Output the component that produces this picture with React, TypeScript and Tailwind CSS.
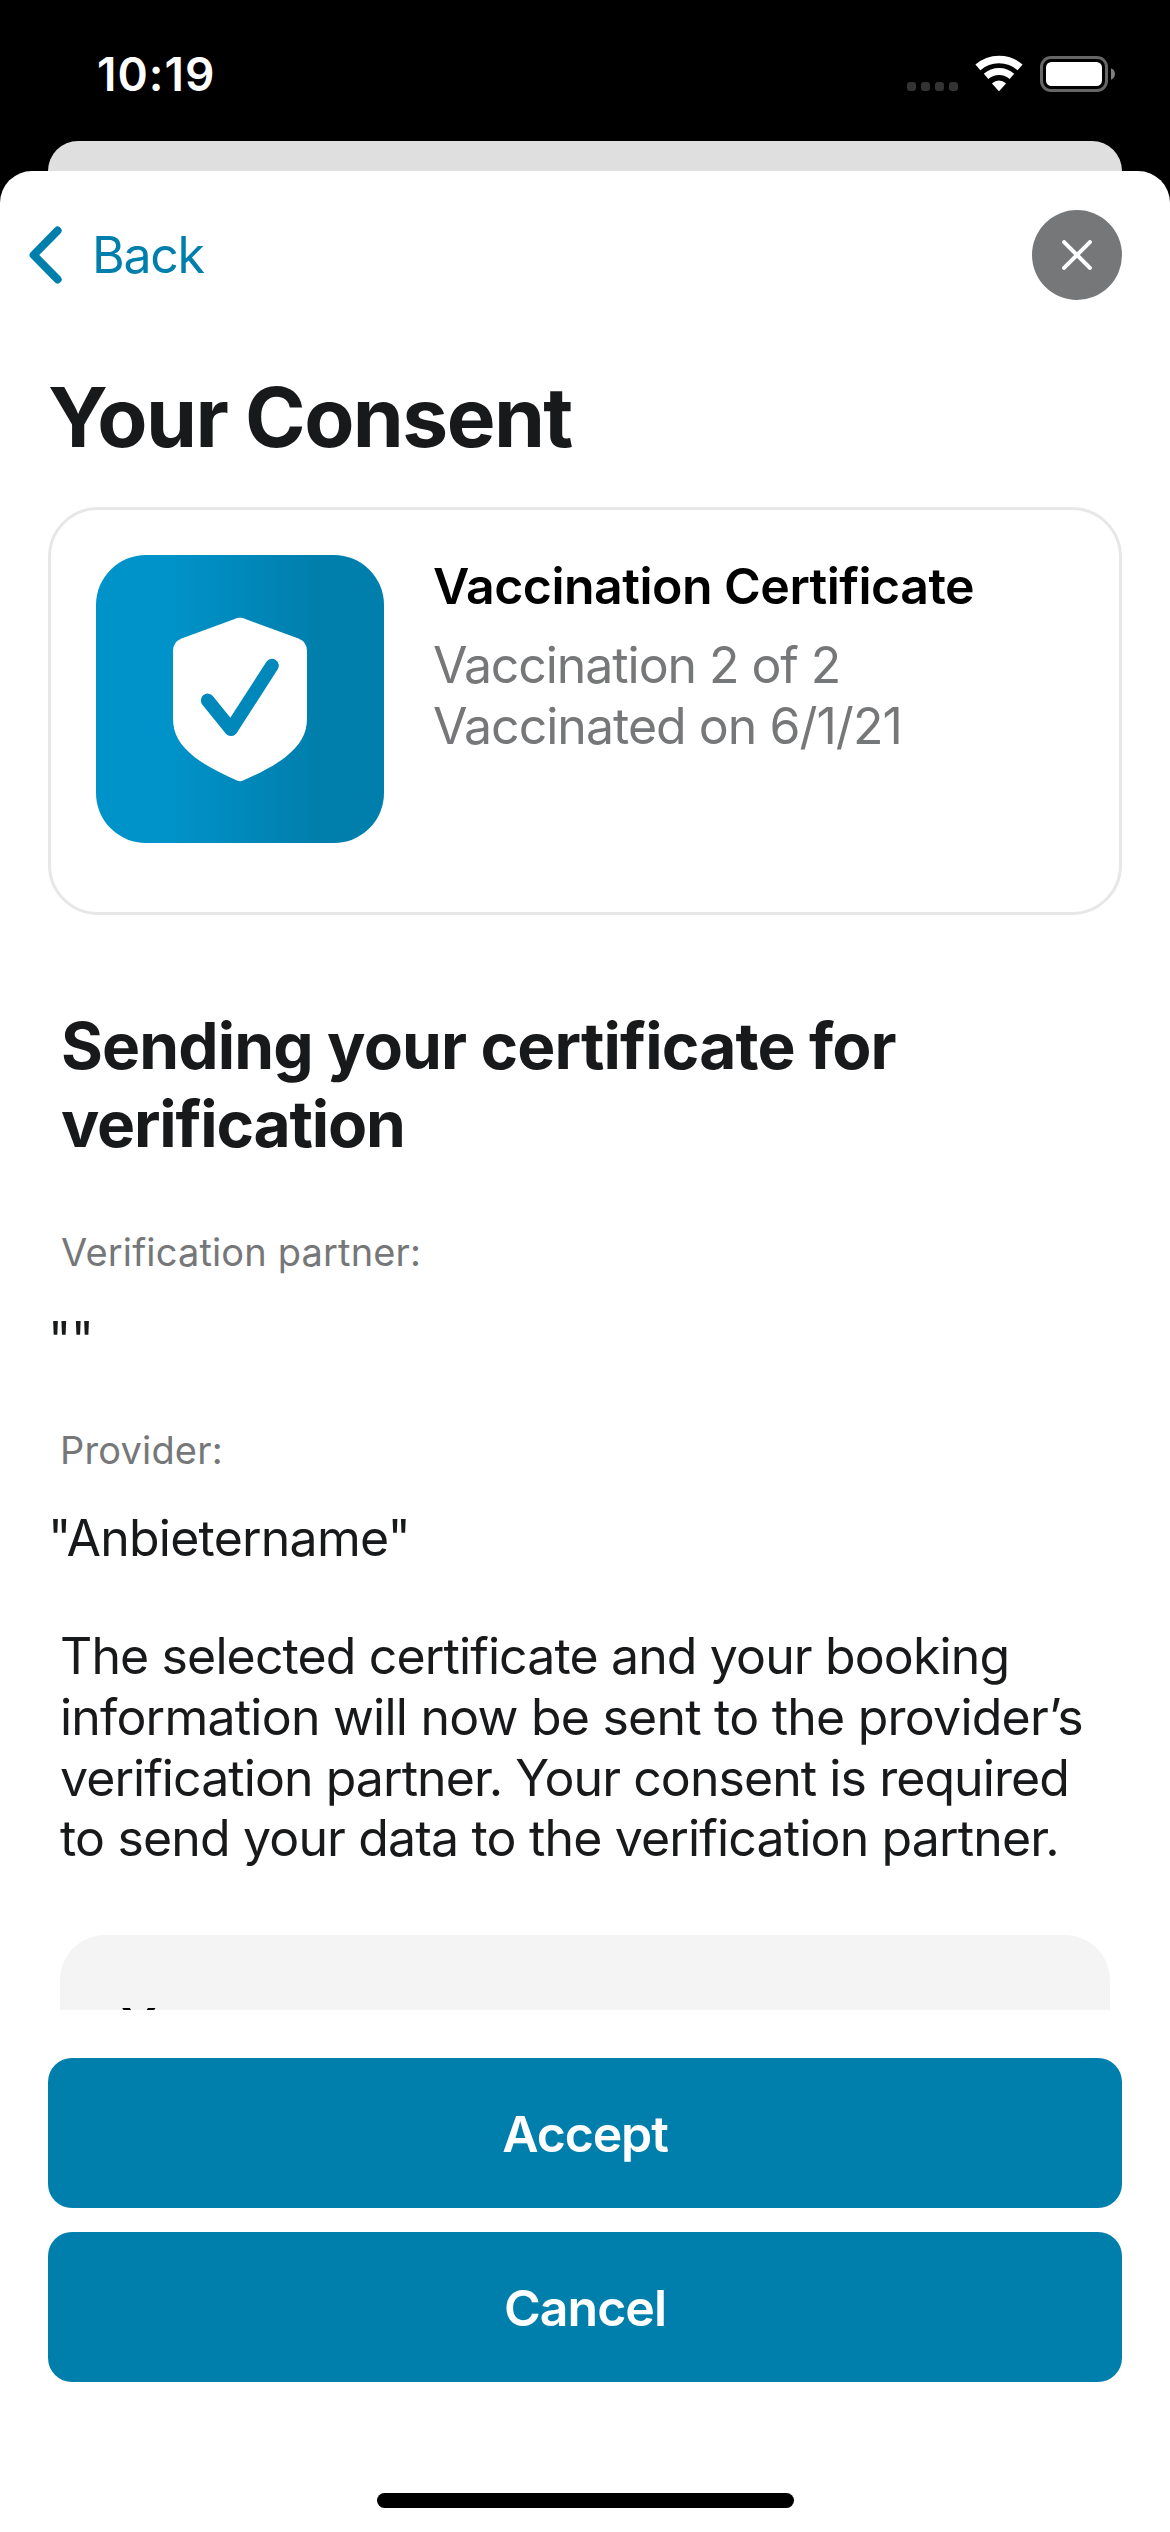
import React from "react";

function WifiIcon() {
  return (
    <svg className="h-9 w-12" viewBox="0 0 48 36" fill="none">
      <path d="M2.9 12.4A32 32 0 0 1 45.1 12.4" stroke="#fff" strokeWidth="7.6" />
      <path d="M11.1 21.4A19.4 19.4 0 0 1 36.9 21.4" stroke="#fff" strokeWidth="6.8" />
      <path d="M24 35.2L17.9 28.6A9 9 0 0 1 30.1 28.6Z" fill="#fff" stroke="#fff" strokeWidth="1.4" strokeLinejoin="round" />
    </svg>
  );
}

function BatteryIcon() {
  return (
    <svg className="h-9 w-[76px]" viewBox="0 0 76 36" fill="none">
      <rect x="1.5" y="1.5" width="65" height="33" rx="9.5" stroke="#666" strokeWidth="3" />
      <rect x="6" y="6" width="56" height="24" rx="5.5" fill="#fff" />
      <path d="M71 12.2C73.4 13.2 75 15.4 75 18S73.4 22.8 71 23.8Z" fill="#808080" />
    </svg>
  );
}

function StatusBar() {
  return (
    <div className="flex h-[141px] justify-between pr-[54px] pl-[97px]">
      <div className="mt-[46px] h-14 text-[46px] leading-[56px] font-semibold tracking-[1.02px] text-white">10:19</div>
      <div className="flex h-[92px] items-end">
        <div className="mr-[17px] mb-px flex gap-[5px]">
          {[0, 1, 2, 3].map((i) => (
            <div key={i} className="size-[9px] rounded-[3px] bg-[#333]" />
          ))}
        </div>
        <div className="mb-px"><WifiIcon /></div>
        <div className="ml-[17px]"><BatteryIcon /></div>
      </div>
    </div>
  );
}

function SheetHeader() {
  return (
    <div className="flex h-[168px] items-center justify-between pr-12 pl-[27px]">
      <button className="flex items-center text-[#007fad]">
        <svg className="h-[66px] w-[37px]" viewBox="0 0 37 66" fill="none">
          <path d="M30.6 8.6L6.6 33L30.6 57.4" stroke="currentColor" strokeWidth="8" strokeLinecap="round" strokeLinejoin="round" />
        </svg>
        <span className="ml-7 text-[50px] leading-[60px] tracking-[-1.28px]">Back</span>
      </button>
      <button className="flex size-[90px] items-center justify-center rounded-full bg-[#757779]">
        <svg className="size-[30px]" viewBox="0 0 30 30" fill="none">
          <path d="M2.1 2.1L27.9 27.9M27.9 2.1L2.1 27.9" stroke="#fff" strokeWidth="4" strokeLinecap="round" />
        </svg>
      </button>
    </div>
  );
}

function ShieldTile() {
  return (
    <div className="flex size-72 shrink-0 justify-center rounded-[50px] bg-linear-to-r from-[#0093c9] from-25% to-[#007fad] to-76%">
      <svg className="mt-[62px] h-[165px] w-[134px]" viewBox="0 0 134 165" fill="none">
        <path
          d="M61 2.2Q67 -0.6 73 2.2L125.5 21.5Q134 25 134 34V101C134 117 127.5 128 112 140.5C100 149.5 85 157 70 163.5Q67 165 64 163.5C49 157 34 149.5 22 140.5C6.5 128 0 117 0 101V34Q0 25 8.5 21.5Z"
          fill="#fff"
        />
        <path d="M34.7 83.4L58 112.3L99 48.6" stroke="#0088ba" strokeWidth="13.6" strokeLinecap="round" strokeLinejoin="round" />
      </svg>
    </div>
  );
}

function CertificateCard() {
  return (
    <div className="mx-12 mt-[39px] flex h-[408px] rounded-[50px] border-[3px] border-[#e7e7e7] pt-[45px] pl-[45px]">
      <ShieldTile />
      <div className="ml-[49px] text-[50px] whitespace-nowrap">
        <div className="mt-px leading-[60px] font-semibold tracking-[-0.52px] text-black">Vaccination Certificate</div>
        <div className="mt-[19px] leading-[61px] text-[#757779]">
          <div className="tracking-[-1.08px]">Vaccination 2 of 2</div>
          <div className="tracking-[-0.98px]">Vaccinated on 6/1/21</div>
        </div>
      </div>
    </div>
  );
}

export default function App() {
  return (
    <div className="flex h-[2532px] w-[1170px] flex-col overflow-hidden bg-black font-['Inter',sans-serif] text-[#18191b]">
      <StatusBar />
      <div className="mx-12 h-[30px] shrink-0 rounded-t-[30px] bg-[#dfdfdf]" />
      <div className="flex flex-1 flex-col rounded-t-[32px] bg-white">
        <SheetHeader />
        <h1 className="mt-[29px] ml-12 text-[82px] leading-[100px] font-bold tracking-[-1.6px]">Your Consent</h1>
        <CertificateCard />
        <h2 className="mt-[92px] ml-[61px] text-[64px] leading-[78px] font-bold">
          <span className="block tracking-[-0.86px]">Sending your certificate for</span>
          <span className="block tracking-[-1.18px]">verification</span>
        </h2>
        <div className="mt-[66px] ml-[61px] text-[38px] leading-[46px] tracking-[0.15px] text-[#757779]">Verification partner:</div>
        <div className="mt-[35px] ml-12 text-[50px] leading-[60px] tracking-[-0.59px]">""</div>
        <div className="mt-[57px] ml-[60px] text-[38px] leading-[46px] tracking-[0.17px] text-[#757779]">Provider:</div>
        <div className="mt-[35px] ml-12 text-[50px] leading-[60px] tracking-[-0.78px]">"Anbietername"</div>
        <p className="mt-[58px] ml-[60px] text-[50px] leading-[60.75px] whitespace-nowrap">
          <span className="block tracking-[-0.87px]">The selected certificate and your booking</span>
          <span className="block tracking-[-0.77px]">information will now be sent to the provider’s</span>
          <span className="block tracking-[-0.93px]">verification partner. Your consent is required</span>
          <span className="block tracking-[-0.84px]">to send your data to the verification partner.</span>
        </p>
        <div className="mx-[60px] mt-[66px] h-[75px] overflow-hidden rounded-t-[45px] bg-[#f4f4f4] pt-[61px] pl-[61px] text-[50px] leading-[60px] font-semibold tracking-[-0.8px] text-black">
          Your consent
        </div>
        <div className="mx-12 mt-12 flex flex-col gap-6 text-[50px] leading-[60px] font-semibold text-white">
          <button className="h-[150px] rounded-3xl bg-[#007fad] pt-[2px] tracking-[-1.17px]">Accept</button>
          <button className="h-[150px] rounded-3xl bg-[#007fad] pt-[2px] tracking-[-0.97px]">Cancel</button>
        </div>
        <div className="mx-auto mt-auto mb-6 h-[15px] w-[417px] rounded-full bg-black" />
      </div>
    </div>
  );
}
